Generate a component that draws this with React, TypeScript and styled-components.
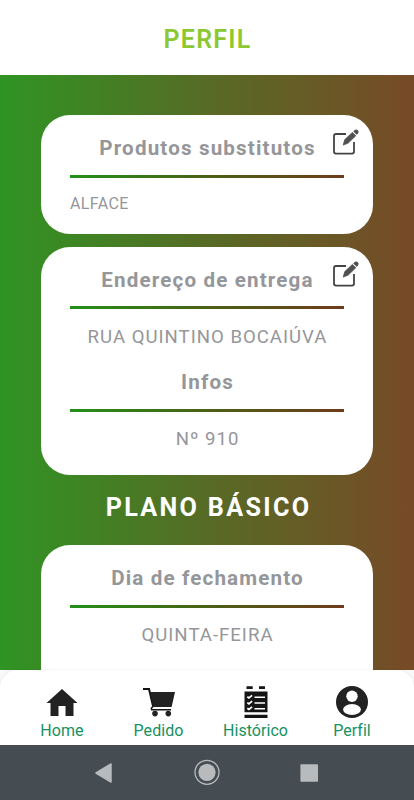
import React from "react";
import styled, { createGlobalStyle } from "styled-components";

const Global = createGlobalStyle`
  * { box-sizing: border-box; }
  body { margin: 0; background: #fff; font-family: Roboto, "Liberation Sans", sans-serif; }
`;

const Screen = styled.div`
  width: 414px;
  height: 800px;
  display: flex;
  flex-direction: column;
  overflow: hidden;
  background: #fafafa;
`;

const Header = styled.header`
  flex: 0 0 75.4px;
  display: flex;
  justify-content: center;
  padding-top: 25px;
  background: #fff;
`;

const PageTitle = styled.h1`
  margin: 0;
  padding-left: 1px;
  font-size: 25px;
  line-height: 30px;
  font-weight: 600;
  letter-spacing: 1.25px;
  color: #8cc832;
`;

const Content = styled.main`
  flex: 0 0 594.4px;
  display: flex;
  flex-direction: column;
  padding: 39.6px 41px 0;
  overflow: hidden;
  background: linear-gradient(90deg, #2f9423 0%, #576b25 50%, #774a27 100%);
`;

const Card = styled.section<{ $height: number }>`
  position: relative;
  flex: 0 0 ${(p) => p.$height}px;
  padding: 19px 29px 0;
  border-radius: 29px;
  background: #fff;
  color: #95969a;
`;

const CardTitle = styled.h2`
  margin: 0;
  padding-left: 1px;
  height: 28px;
  font-size: 20.6px;
  line-height: 28px;
  font-weight: 700;
  letter-spacing: 1.15px;
  text-align: center;
  white-space: nowrap;
`;

const Divider = styled.div`
  height: 3.2px;
  margin-top: 12.6px;
  background: linear-gradient(90deg, #239018, #4b6115 50%, #6f3b1b);
`;

const CardText = styled.p<{ $small?: boolean }>`
  margin: ${(p) => (p.$small ? 12.6 : 13.4)}px 0 0;
  padding-left: ${(p) => (p.$small ? 0 : 1)}px;
  height: 28.8px;
  font-size: ${(p) => (p.$small ? 16 : 18.6)}px;
  line-height: 28px;
  font-weight: 400;
  letter-spacing: ${(p) => (p.$small ? 0.4 : 1)}px;
  text-align: ${(p) => (p.$small ? "left" : "center")};
  white-space: nowrap;
`;

const Group = styled.div`
  height: 102.3px;
`;

const EditButton = styled.button`
  position: absolute;
  top: 13px;
  right: 13px;
  width: 28px;
  height: 28px;
  padding: 0;
  border: 0;
  background: none;
  svg { display: block; }
`;

const PlanTitle = styled.h2`
  margin: 0;
  padding-left: 3px;
  flex: 0 0 70.5px;
  font-size: 25.2px;
  line-height: 65px;
  font-weight: 700;
  letter-spacing: 2.3px;
  text-align: center;
  white-space: nowrap;
  color: #fff;
`;

const Gap = styled.div`
  flex: 0 0 13px;
`;

const TabBar = styled.nav`
  flex: 0 0 75.2px;
  display: grid;
  grid-template-columns: 124px 69px 125px 68px;
  border-radius: 18px 18px 0 0;
  background: #fff;
  box-shadow: 0 0 5px rgba(0, 0, 0, 0.08);
  clip-path: inset(-1px 0 0 0);
`;

const Tab = styled.a`
  display: flex;
  flex-direction: column;
  align-items: center;
  padding-top: 16px;
  color: #16915f;
  font-size: 16px;
  line-height: 22px;
  font-weight: 400;
  letter-spacing: 0.05px;
  white-space: nowrap;
  svg { display: block; margin-bottom: 1.8px; }
`;

const SystemBar = styled.footer`
  flex: 0 0 55.4px;
  display: flex;
  align-items: center;
  padding-left: 94px;
  background: #454d52;
`;

const SystemSlot = styled.div<{ $width: number }>`
  flex: 0 0 ${(p) => p.$width}px;
  svg { display: block; }
`;

const EditIcon = () => (
  <svg width="28" height="28" viewBox="0 0 28 28" fill="none">
    <path d="M14 6H4Q2 6 2 8V23.6Q2 25.6 4 25.6H20Q22 25.6 22 23.6V14" stroke="#444" strokeWidth="1.8" />
    <path d="M11.2 17.1 12.8 11.6 20.4 4.4 23.8 7.7 16.2 15.1Z" fill="#505050" stroke="#505050" strokeWidth=".8" strokeLinejoin="round" />
    <path d="M21.3 3.5 22.7 2.1Q24.2.7 25.9 2.2 27.4 3.8 26 5.4L24.7 6.8Z" fill="#505050" />
  </svg>
);

const HomeIcon = () => (
  <svg width="32" height="32" viewBox="0 0 32 32">
    <path d="M16 3 31.5 17H27.5V30H19.5V20H12.5V30H4.5V17H.5Z" fill="#222" />
  </svg>
);

const CartIcon = () => (
  <svg width="34" height="32" viewBox="0 0 34 32" fill="none">
    <path d="M1 3H7L11.2 20.7" stroke="#111" strokeWidth="2" />
    <path d="M7.8 6H33L29.6 21H11.3Z" fill="#222" />
    <path d="M11.2 20.7Q8.7 21.5 9.7 23.8H29" stroke="#151515" strokeWidth="1.6" />
    <circle cx="13" cy="27.6" r="2.8" fill="#222" />
    <circle cx="26.3" cy="27.6" r="2.8" fill="#222" />
  </svg>
);

const HistoryIcon = () => (
  <svg width="32" height="32" viewBox="0 0 32 32" fill="none">
    <path d="M6.5.3H12.7V3H6.5ZM19 .3H25V3H19ZM4.5 5.5H27.5V26.2H4.5ZM4.5 28.7H27.5V32H4.5Z" fill="#151515" />
    <path d="M14.5 11.2H25M14.5 17H25M14.5 22.7H25" stroke="#fff" strokeWidth="1.5" />
    <path d="m7.3 10.8 1.6 1.2 3.2-2.7M7.3 16.6l1.6 1.2 3.2-2.7M7.3 22.3l1.6 1.2 3.2-2.7" stroke="#fff" strokeWidth="1.7" />
  </svg>
);

const ProfileIcon = () => (
  <svg width="32" height="32" viewBox="0 0 32 32">
    <circle cx="16" cy="16" r="16" fill="#222" />
    <circle cx="16" cy="10.2" r="5.7" fill="#fff" />
    <ellipse cx="16" cy="23.5" rx="8.9" ry="5.4" fill="#fff" />
  </svg>
);

const tabs = [
  { label: "Home", icon: <HomeIcon /> },
  { label: "Pedido", icon: <CartIcon /> },
  { label: "Histórico", icon: <HistoryIcon /> },
  { label: "Perfil", icon: <ProfileIcon /> },
];

export default function App() {
  return (
    <Screen>
      <Global />
      <Header>
        <PageTitle>PERFIL</PageTitle>
      </Header>
      <Content>
        <Card $height={118.7}>
          <CardTitle>Produtos substitutos</CardTitle>
          <EditButton aria-label="Editar produtos"><EditIcon /></EditButton>
          <Divider />
          <CardText $small>ALFACE</CardText>
        </Card>
        <Gap />
        <Card $height={228}>
          <EditButton aria-label="Editar endereço"><EditIcon /></EditButton>
          <Group>
            <CardTitle>Endereço de entrega</CardTitle>
            <Divider />
            <CardText>RUA QUINTINO BOCAIÚVA</CardText>
          </Group>
          <CardTitle>Infos</CardTitle>
          <Divider />
          <CardText>Nº 910</CardText>
        </Card>
        <PlanTitle>PLANO BÁSICO</PlanTitle>
        <Card $height={180}>
          <CardTitle>Dia de fechamento</CardTitle>
          <Divider />
          <CardText>QUINTA-FEIRA</CardText>
        </Card>
      </Content>
      <TabBar>
        {tabs.map((tab) => (
          <Tab key={tab.label}>
            {tab.icon}
            {tab.label}
          </Tab>
        ))}
      </TabBar>
      <SystemBar>
        <SystemSlot $width={99}>
          <svg width="20" height="22" viewBox="0 0 20 22">
            <path d="M2 11 17 2V20Z" fill="#b7bbbd" stroke="#b7bbbd" strokeWidth="1.5" strokeLinejoin="round" />
          </svg>
        </SystemSlot>
        <SystemSlot $width={106}>
          <svg width="28" height="27" viewBox="0 0 28 27">
            <circle cx="14" cy="13.3" r="12" fill="none" stroke="#b7bbbd" strokeWidth="1.3" />
            <circle cx="14" cy="13.3" r="8.6" fill="#b7bbbd" />
          </svg>
        </SystemSlot>
        <SystemSlot $width={20}>
          <svg width="20" height="20" viewBox="0 0 20 20">
            <rect x="1.4" y="1.2" width="17.6" height="17.6" rx="1" fill="#b7bbbd" />
          </svg>
        </SystemSlot>
      </SystemBar>
    </Screen>
  );
}
